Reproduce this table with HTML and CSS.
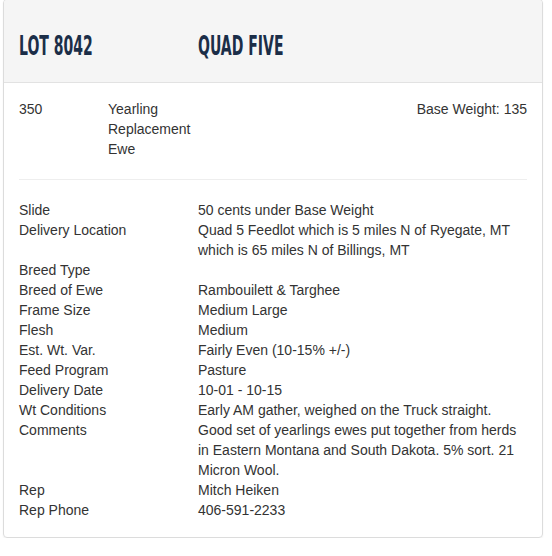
FILE: index.html
```html
<!DOCTYPE html>
<html>
<head>
<meta charset="utf-8">
<link rel="stylesheet" href="styles.css">
</head>
<body>
<div class="card">
  <div class="card-head">
    <div class="lot"><span class="title">LOT 8042</span></div>
    <div class="seller"><span class="title">QUAD FIVE</span></div>
  </div>
  <div class="card-body">
    <div class="summary">
      <div class="qty">350</div>
      <div class="kind">Yearling Replacement Ewe</div>
      <div class="base">Base Weight: 135</div>
    </div>
    <hr class="sep">
    <dl class="details">
      <dt>Slide</dt><dd>50 cents under Base Weight</dd>
      <dt>Delivery Location</dt><dd>Quad 5 Feedlot which is 5 miles N of Ryegate, MT which is 65 miles N of Billings, MT</dd>
      <dt>Breed Type</dt><dd></dd>
      <dt>Breed of Ewe</dt><dd>Rambouilett &amp; Targhee</dd>
      <dt>Frame Size</dt><dd>Medium Large</dd>
      <dt>Flesh</dt><dd>Medium</dd>
      <dt>Est. Wt. Var.</dt><dd>Fairly Even (10-15% +/-)</dd>
      <dt>Feed Program</dt><dd>Pasture</dd>
      <dt>Delivery Date</dt><dd>10-01 - 10-15</dd>
      <dt>Wt Conditions</dt><dd>Early AM gather, weighed on the Truck straight.</dd>
      <dt>Comments</dt><dd>Good set of yearlings ewes put together from herds in Eastern Montana and South Dakota. 5% sort. 21 Micron Wool.</dd>
      <dt>Rep</dt><dd>Mitch Heiken</dd>
      <dt>Rep Phone</dt><dd>406-591-2233</dd>
    </dl>
  </div>
</div>
</body>
</html>
```

FILE: styles.css
```css
html, body {
  margin: 0;
  padding: 0;
  background: #fff;
}
body {
  font-family: "Liberation Sans", Arial, sans-serif;
  font-size: 14px;
  line-height: 20px;
  color: #333;
}
.card {
  width: 538px;
  margin: -1px 0 0 3px;
  border: 1px solid #dcdcdc;
  border-radius: 4px;
  box-shadow: 0 1px 2px rgba(0,0,0,0.06);
  overflow: hidden;
}
.card-head {
  display: grid;
  grid-template-columns: 179px 1fr;
  height: 83px;
  box-sizing: border-box;
  padding: 0 15px;
  background: #f5f5f5;
  border-bottom: 1px solid #e2e2e2;
  align-items: start;
}
.title {
  display: inline-block;
  margin-top: 31px;
  font-family: "DejaVu Sans Condensed", "DejaVu Sans", sans-serif;
  font-weight: bold;
  font-size: 26px;
  line-height: 30px;
  color: #1b2e48;
  transform: scaleX(0.6);
  transform-origin: 0 50%;
  white-space: nowrap;
}
.card-body {
  padding: 16px 15px 17px;
}
.summary {
  display: grid;
  grid-template-columns: 89px 120px 1fr;
}
.kind {
  width: 104px;
}
.base {
  text-align: right;
}
.sep {
  margin: 20px 0;
  border: 0;
  border-top: 1px solid #eee;
  height: 0;
}
.details {
  display: grid;
  grid-template-columns: 179px 1fr;
  margin: 0;
}
.details dt, .details dd {
  margin: 0;
  font-weight: normal;
  min-height: 20px;
}
```
